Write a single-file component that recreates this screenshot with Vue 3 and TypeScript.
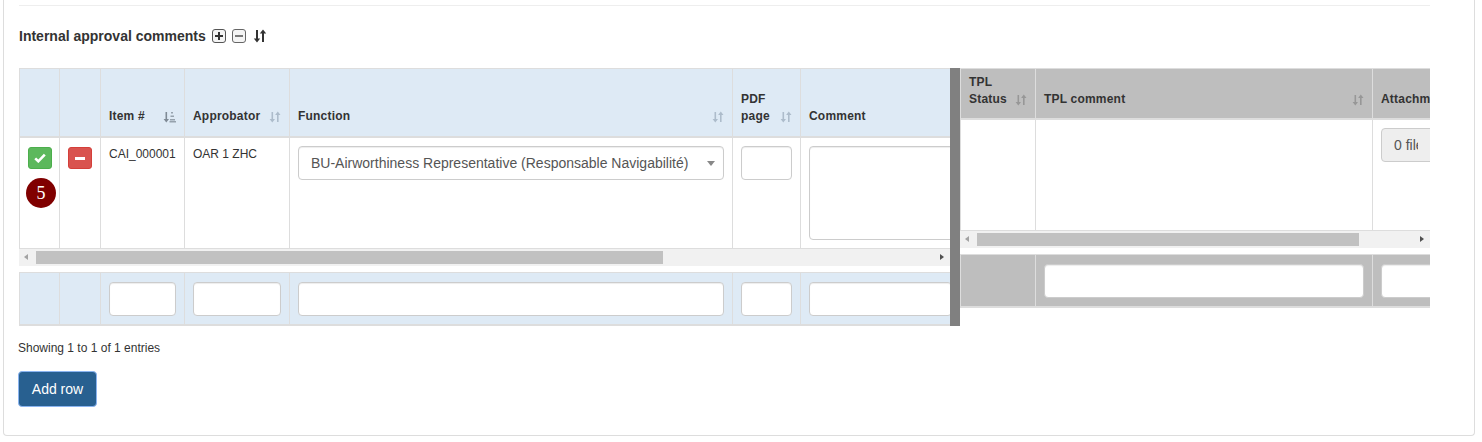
<script setup lang="ts">
interface Col {
  label: string[]
  width: number
  sort?: 'none' | 'asc'
}

const leftCols: Col[] = [
  { label: [], width: 41 },
  { label: [], width: 41 },
  { label: ['Item #'], width: 84, sort: 'asc' },
  { label: ['Approbator'], width: 105, sort: 'none' },
  { label: ['Function'], width: 443, sort: 'none' },
  { label: ['PDF', 'page'], width: 68, sort: 'none' },
  { label: ['Comment'], width: 160 },
]

const rightCols: Col[] = [
  { label: ['TPL', 'Status'], width: 76, sort: 'none' },
  { label: ['TPL comment'], width: 337, sort: 'none' },
  { label: ['Attachments'], width: 100 },
]
</script>

<template>
  <div class="panel">
    <hr class="rule" />
    <h4 class="title">
      <span>Internal approval comments</span>
      <svg class="mini" width="14" height="14" viewBox="0 0 14 14">
        <rect x="0.5" y="0.5" width="13" height="13" rx="2.5" fill="#f4f4f4" stroke="#555" />
        <path d="M3 7h8M7 3v8" stroke="#333" stroke-width="2" />
      </svg>
      <svg class="mini" width="14" height="14" viewBox="0 0 14 14">
        <rect x="0.5" y="0.5" width="13" height="13" rx="2.5" fill="#f4f4f4" stroke="#666" />
        <path d="M3 7h8" stroke="#444" stroke-width="1.4" />
      </svg>
      <svg class="sort-big" width="14" height="14" viewBox="0 0 14 14">
        <path d="M3 1h2v8.5h2.2L4 13.5.8 9.5H3zM9 13V4.500H6.800L10 .5l3.200 4H11V13z" fill="#333" />
      </svg>
    </h4>

    <div class="grid-wrap">
      <div class="pane pane-left">
        <table class="grid">
          <colgroup><col v-for="(c, i) in leftCols" :key="i" :style="{ width: c.width + 'px' }" /></colgroup>
          <thead>
            <tr>
              <th v-for="(c, i) in leftCols" :key="i">
                <div class="th-inner">
                  <span class="th-label"><template v-for="(l, j) in c.label" :key="j"><br v-if="j" />{{ l }}</template></span>
                  <svg v-if="c.sort === 'none'" class="sort" width="12" height="12" viewBox="0 0 12 12">
                    <path d="M2.500 1h1.600v7h1.900L3.300 11.500.6 8h1.900zM8 11V4H6.100L8.800.5 11.500 4H9.600v7z" fill="#adbccb" />
                  </svg>
                  <svg v-else-if="c.sort === 'asc'" class="sort" width="13" height="12" viewBox="0 0 13 12">
                    <path d="M2.500 1h1.600v7h1.900L3.300 11.500.6 8h1.900z" fill="#7f8a95" />
                    <path d="M8 1h2v1.500H8zM7.500 4.500h3.500V6H7.500zM7 8h5v1.500H7zM6.500 10H13v1.500H6.500z" fill="#96a2ad" />
                  </svg>
                </div>
              </th>
            </tr>
          </thead>
          <tbody>
            <tr class="row">
              <td class="act">
                <button class="icon-btn ok" type="button">
                  <svg width="12" height="10" viewBox="0 0 12 10"><path d="M1.200 5.400 4.300 8.300 10.800 1.600" fill="none" stroke="#fff" stroke-width="2.600" /></svg>
                </button>
                <div class="badge">5</div>
              </td>
              <td class="act">
                <button class="icon-btn del" type="button"><span class="minus"></span></button>
              </td>
              <td class="txt">CAI_000001</td>
              <td class="txt">OAR 1 ZHC</td>
              <td class="ctl">
                <div class="select">
                  <span>BU-Airworthiness Representative (Responsable Navigabilité)</span>
                  <i class="caret"></i>
                </div>
              </td>
              <td class="ctl"><div class="input"></div></td>
              <td class="ctl"><div class="input area"></div></td>
            </tr>
          </tbody>
        </table>
        <div class="scroll">
          <i class="arrow arrow-l"></i>
          <div class="track"><div class="thumb thumb-left"></div></div>
          <i class="arrow arrow-r"></i>
        </div>
        <table class="grid foot">
          <colgroup><col v-for="(c, i) in leftCols" :key="i" :style="{ width: c.width + 'px' }" /></colgroup>
          <tbody>
            <tr>
              <td v-for="(c, i) in leftCols" :key="i">
                <div v-if="i > 1" class="input"></div>
              </td>
            </tr>
          </tbody>
        </table>
      </div>

      <div class="divider"></div>

      <div class="pane pane-right">
        <table class="grid grey">
          <colgroup><col v-for="(c, i) in rightCols" :key="i" :style="{ width: c.width + 'px' }" /></colgroup>
          <thead>
            <tr>
              <th v-for="(c, i) in rightCols" :key="i">
                <div class="th-inner">
                  <span class="th-label"><template v-for="(l, j) in c.label" :key="j"><br v-if="j" />{{ l }}</template></span>
                  <svg v-if="c.sort" class="sort" width="12" height="12" viewBox="0 0 12 12">
                    <path d="M2.500 1h1.600v7h1.900L3.300 11.500.6 8h1.900zM8 11V4H6.100L8.800.5 11.500 4H9.600v7z" fill="#979797" />
                  </svg>
                </div>
              </th>
            </tr>
          </thead>
          <tbody>
            <tr class="row">
              <td></td>
              <td></td>
              <td class="ctl"><button class="file-btn" type="button"><span>0 files</span></button></td>
            </tr>
          </tbody>
        </table>
        <div class="scroll">
          <i class="arrow arrow-l"></i>
          <div class="track"><div class="thumb thumb-right"></div></div>
          <i class="arrow arrow-r"></i>
        </div>
        <table class="grid grey foot">
          <colgroup><col v-for="(c, i) in rightCols" :key="i" :style="{ width: c.width + 'px' }" /></colgroup>
          <tbody>
            <tr>
              <td></td>
              <td><div class="input"></div></td>
              <td><div class="input"></div></td>
            </tr>
          </tbody>
        </table>
      </div>
    </div>

    <p class="info">Showing 1 to 1 of 1 entries</p>
    <button class="add" type="button">Add row</button>
  </div>
</template>

<style scoped>
.panel {
  box-sizing: border-box;
  width: 1472px;
  height: 436px;
  margin-left: 3px;
  padding: 5px 44px 0 15px;
  background: #fff;
  border: 1px solid #ddd;
  border-top: 0;
  border-radius: 0 0 4px 4px;
  font-family: "Liberation Sans", Arial, sans-serif;
  font-size: 12px;
  color: #333;
}

.rule {
  height: 1px;
  margin: 0;
  border: 0;
  background: #eee;
}

.title {
  display: flex;
  align-items: center;
  gap: 6px;
  height: 20px;
  margin: 20px 0 0;
  font-size: 14px;
  font-weight: 700;
  line-height: 20px;
}

.sort-big {
  margin-left: 1px;
}

.grid-wrap {
  display: flex;
  align-items: flex-start;
  margin-top: 22px;
}

.pane {
  overflow: hidden;
  flex: none;
}

.pane-left {
  width: 931px;
}

.pane-right {
  width: 470px;
}

.divider {
  flex: none;
  width: 10px;
  height: 258px;
  background: #808080;
}

.grid {
  table-layout: fixed;
  width: 1px;
  border-collapse: separate;
  border-spacing: 0;
}

.grid th,
.grid td {
  box-sizing: border-box;
  padding: 0;
  border-right: 1px solid #ddd;
  border-bottom: 1px solid #ddd;
}

.grid th:first-child,
.grid td:first-child {
  border-left: 1px solid #ddd;
}

.grid th {
  height: 70px;
  padding: 0 8px 11px 8px;
  background: #deeaf5;
  border-top: 1px solid #ddd;
  border-bottom-width: 2px;
  vertical-align: bottom;
  text-align: left;
  font-size: 12px;
  letter-spacing: 0.2px;
  line-height: 17px;
}

.th-inner {
  display: flex;
  align-items: flex-end;
  justify-content: space-between;
}

.sort {
  flex: none;
  margin-bottom: 2px;
}

.row td {
  height: 111px;
  vertical-align: top;
}

.act {
  padding-top: 9px !important;
  text-align: center;
}

.txt {
  padding: 9px 8px 0 8px !important;
  line-height: 14px;
}

.ctl {
  padding: 8px 8px 0 8px !important;
}

.icon-btn {
  display: flex;
  align-items: center;
  justify-content: center;
  width: 24px;
  height: 22px;
  margin: 0 auto;
  padding: 0;
  border: 1px solid;
  border-radius: 3px;
}

.ok {
  background: #5cb85c;
  border-color: #4cae4c;
}

.del {
  background: #d9534f;
  border-color: #d43f3a;
}

.minus {
  width: 10px;
  height: 3px;
  background: #fff;
}

.badge {
  width: 30px;
  height: 30px;
  margin: 9px auto 0 6px;
  border-radius: 50%;
  background: #800000;
  color: #fff;
  font-family: "Liberation Serif", serif;
  font-size: 18px;
  line-height: 30px;
  text-align: center;
}

.select,
.input {
  box-sizing: border-box;
  height: 34px;
  background: #fff;
  border: 1px solid #ccc;
  border-radius: 4px;
  box-shadow: inset 0 1px 1px rgba(0, 0, 0, 0.075);
}

.select {
  display: flex;
  align-items: center;
  justify-content: space-between;
  padding: 0 8px 0 12px;
  color: #555;
  font-size: 14px;
  white-space: nowrap;
}

.caret {
  width: 0;
  height: 0;
  border-top: 5px solid #888;
  border-left: 4px solid transparent;
  border-right: 4px solid transparent;
}

.area {
  width: 200px;
  height: 94px;
}

.scroll {
  display: flex;
  align-items: center;
  height: 17px;
  background: #f1f1f1;
}

.arrow {
  flex: none;
  width: 17px;
  height: 17px;
  position: relative;
}

.arrow::after {
  content: "";
  position: absolute;
  top: 5px;
  width: 0;
  height: 0;
  border-top: 3.5px solid transparent;
  border-bottom: 3.5px solid transparent;
}

.arrow-l::after {
  left: 5px;
  border-right: 4px solid #a3a3a3;
}

.arrow-r::after {
  left: 7px;
  border-left: 4px solid #505050;
}

.track {
  flex: 1;
  height: 13px;
}

.thumb {
  height: 13px;
  background: #c1c1c1;
}

.thumb-left {
  width: 627px;
}

.thumb-right {
  width: 382px;
}

.foot {
  margin-top: 6px;
}

.foot td {
  height: 54px;
  padding: 0 8px;
  background: #deeaf5;
  border-top: 1px solid #ddd;
  border-bottom-width: 2px;
  vertical-align: middle;
}

.grey th,
.grey.foot td {
  background: #bebebe;
}

.grey th {
  height: 52px;
  padding-bottom: 10px;
}

.grey .row td {
  height: 111px;
}

.file-btn {
  box-sizing: border-box;
  display: block;
  width: 100px;
  height: 34px;
  padding: 0 0 0 12px;
  background: #eee;
  border: 1px solid #ccc;
  border-radius: 4px;
  color: #337ab7;
  font-family: inherit;
  font-size: 14px;
  text-align: left;
}

.file-btn span {
  display: block;
  width: 24px;
  overflow: hidden;
  white-space: nowrap;
  color: #555;
}

.info {
  margin: 15px 0 0 -1px;
  line-height: 14px;
  font-size: 12px;
}

.add {
  display: block;
  box-sizing: border-box;
  width: 79px;
  height: 36px;
  margin: 16px 0 0 -1px;
  padding: 0;
  background: #286090;
  border: 1px solid #8ab4f0;
  border-radius: 4px;
  color: #fff;
  font-family: inherit;
  font-size: 14px;
}
</style>

<style>
body {
  margin: 0;
  background: #fff;
}
</style>
